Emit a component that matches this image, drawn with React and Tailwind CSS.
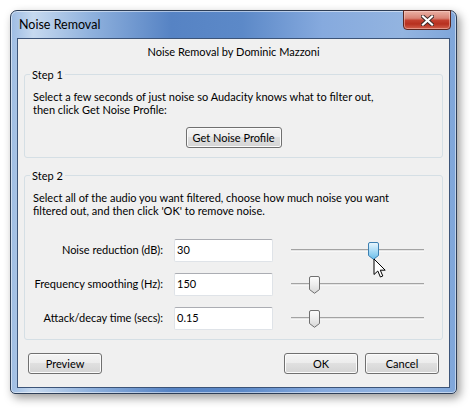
import React from "react";

// Win7 style thumb (pointed bottom)
const Thumb = ({ hot = false }) => (
  <svg width="11" height="18" viewBox="0 0 11 18">
    <defs>
      <linearGradient id={hot ? "thumbHot" : "thumbCold"} x1="0" y1="0" x2="0" y2="1">
        {hot ? (
          <>
            <stop offset="0" stopColor="#eaf6fd" />
            <stop offset="0.5" stopColor="#a9dbf6" />
            <stop offset="1" stopColor="#67bdea" />
          </>
        ) : (
          <>
            <stop offset="0" stopColor="#fdfdfd" />
            <stop offset="0.5" stopColor="#ececec" />
            <stop offset="1" stopColor="#d6d6d6" />
          </>
        )}
      </linearGradient>
    </defs>
    <path
      d="M2 0.5 H9 A1.5 1.5 0 0 1 10.5 2 V13.5 L5.5 17.3 L0.5 13.5 V2 A1.5 1.5 0 0 1 2 0.5 Z"
      fill={`url(#${hot ? "thumbHot" : "thumbCold"})`}
      stroke={hot ? "#3c7fb1" : "#707070"}
    />
  </svg>
);

const Slider = ({ pos, hot }) => (
  <div className="relative ml-[18px] w-[133px] h-[18px] flex items-center">
    <div className="w-full h-[3px] border-t border-[#a3a3a3] bg-[#e4e4e4] border-b border-b-[#f7f7f7]" />
    <div className="absolute top-0" style={{ left: pos - 5 }}>
      <Thumb hot={hot} />
    </div>
  </div>
);

const Btn = ({ children, className = "" }) => (
  <button
    type="button"
    className={`h-[21px] whitespace-nowrap border border-[#707070] rounded-[3px] bg-[linear-gradient(#f4f4f4_0%,#ececec_50%,#e0e0e0_50%,#d4d4d4_100%)] shadow-[inset_0_0_0_1px_#fbfbfb] text-black leading-[15px] ${className}`}
  >
    {children}
  </button>
);

const Row = ({ label, value, pos, hot }) => (
  <div className="flex items-center h-[23px]">
    <div className="w-[130px] text-right whitespace-nowrap">{label}</div>
    <div className="ml-[11px] w-[99px] h-[23px] bg-white border border-[#dfe3e8] border-t-[#abadb3] rounded-[2px] pl-[2px] flex items-center">
      {value}
    </div>
    <Slider pos={pos} hot={hot} />
  </div>
);

export default function App() {
  return (
    <div className="w-[475px] h-[413px] bg-white pl-[10px] pt-[10px] font-['Segoe_UI','Lato',sans-serif] text-[11px] text-black">
      <div className="relative w-[447px] h-[384px] flex flex-col rounded-t-[7px] rounded-b-[5px] border border-[#2d3e57] bg-[linear-gradient(90deg,#9dbce3_0%,#c6d9ef_5%,#8fb1dd_18%,#5683c4_36%,#5c89c8_52%,#86aade_70%,#93b4e0_88%,#7fa6da_100%)] shadow-[inset_0_0_0_1px_rgba(255,255,255,0.5),3px_4px_10px_rgba(0,0,0,0.4)]">
        {/* Title bar */}
        <div className="h-[27px] flex items-start">
          <span className="pl-[8px] pt-[6px] text-[12.5px] leading-[16px] text-black">Noise Removal</span>
          <div className="ml-auto mr-[5px] -mt-[1px] w-[48px] h-[20px] rounded-b-[4px] border border-[#5b2620] bg-[linear-gradient(#eab1a5_0%,#d98476_40%,#c3402f_52%,#b7301f_72%,#d2604d_100%)] shadow-[inset_0_0_0_1px_rgba(255,220,210,0.45)] flex items-center justify-center">
            <svg width="13" height="11" viewBox="0 0 13 11">
              <path d="M2 1.5 L11 9.5 M11 1.5 L2 9.5" stroke="#3b2a28" strokeWidth="4" strokeLinecap="square" />
              <path d="M2 1.5 L11 9.5 M11 1.5 L2 9.5" stroke="#ffffff" strokeWidth="2.2" strokeLinecap="square" />
            </svg>
          </div>
        </div>

        {/* Client area */}
        <div className="mx-[6px] mb-[5px] flex-1 border border-[#3c5478] bg-[#f0f0f0] flex flex-col">
          <div className="pt-[5px] leading-[15px] text-center">Noise Removal by Dominic Mazzoni</div>

          <fieldset className="mt-[8px] mx-[6px] border border-[#d5dfe5] rounded-[3px] px-[5px] pb-[9px]">
            <legend className="px-[2px] leading-[15px]">Step 1</legend>
            <div className="pt-[8px] pl-[3px] leading-[13px]">
              <div>Select a few seconds of just noise so Audacity knows what to filter out,</div>
              <div>then click Get Noise Profile:</div>
            </div>
            <div className="mt-[11px] flex justify-center">
              <Btn className="w-[96px]">Get Noise Profile</Btn>
            </div>
          </fieldset>

          <fieldset className="mt-[10px] mx-[6px] border border-[#d5dfe5] rounded-[3px] px-[5px] pb-[9px]">
            <legend className="px-[2px] leading-[15px]">Step 2</legend>
            <div className="pt-[8px] pl-[3px] leading-[13px] whitespace-nowrap">
              <div>Select all of the audio you want filtered, choose how much noise you want</div>
              <div>filtered out, and then click 'OK' to remove noise.</div>
            </div>
            <div className="mt-[22px] pl-[3px] flex flex-col gap-[11px]">
              <Row label="Noise reduction (dB):" value="30" pos={82} hot />
              <Row label="Frequency smoothing (Hz):" value="150" pos={23} />
              <Row label="Attack/decay time (secs):" value="0.15" pos={23} />
            </div>
          </fieldset>

          <div className="mt-[13px] mx-[10px] flex items-center">
            <Btn className="w-[74px]">Preview</Btn>
            <Btn className="w-[74px] ml-auto">OK</Btn>
            <Btn className="w-[74px] ml-[7px]">Cancel</Btn>
          </div>
        </div>

        {/* mouse pointer over the first slider */}
        <svg className="absolute left-[362px] top-[247px]" width="14" height="21" viewBox="0 0 14 21">
          <path d="M1 1 L1 16.5 L4.8 13 L7.4 19 L9.8 18 L7.3 12.2 L12.2 12.2 Z" fill="#ffffff" stroke="#000000" strokeWidth="1" strokeLinejoin="miter" />
        </svg>
      </div>
    </div>
  );
}
